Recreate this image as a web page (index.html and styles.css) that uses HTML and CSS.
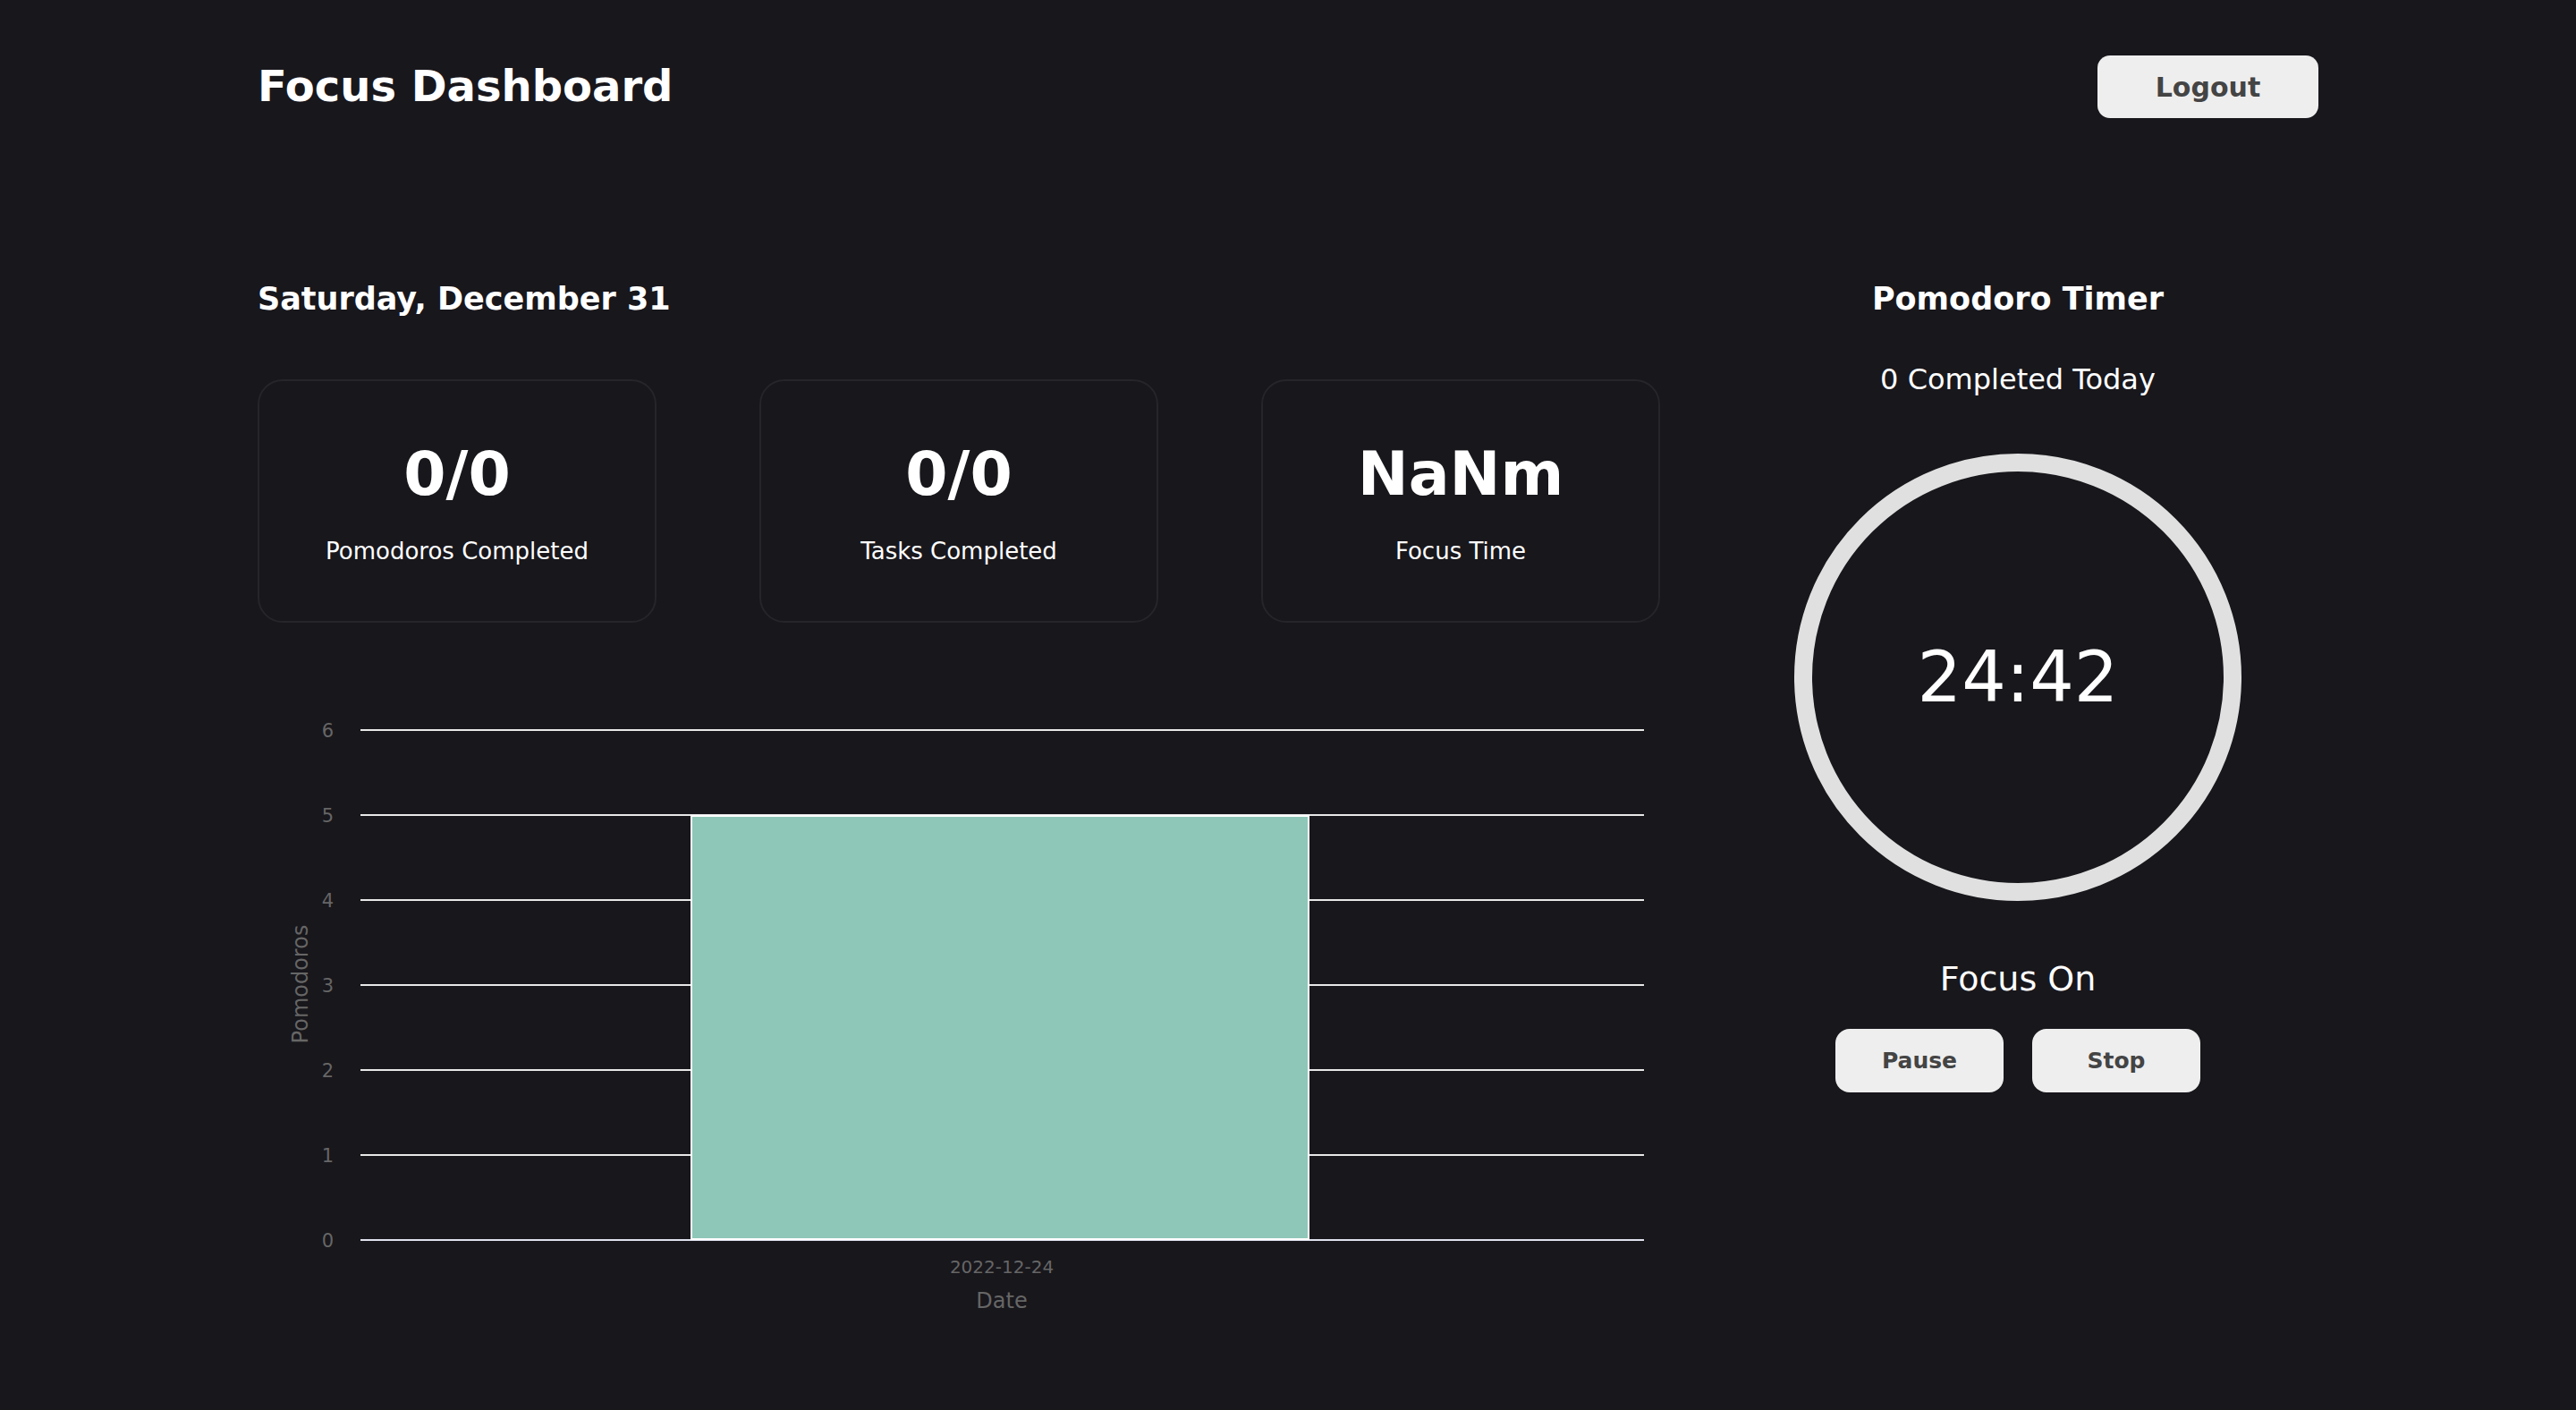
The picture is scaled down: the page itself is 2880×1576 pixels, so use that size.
FILE: index.html
```html
<!DOCTYPE html>
<html lang="en">
<head>
<meta charset="utf-8">
<title>Focus Dashboard</title>
<link rel="stylesheet" href="styles.css">
</head>
<body>
<div class="page">
  <header class="topbar">
    <h1 class="brand">Focus Dashboard</h1>
    <button class="btn btn-logout">Logout</button>
  </header>

  <main class="layout">
    <section class="overview">
      <h2 class="section-title">Saturday, December 31</h2>
      <div class="stats">
        <div class="stat-card">
          <div class="stat-value">0/0</div>
          <div class="stat-label">Pomodoros Completed</div>
        </div>
        <div class="stat-card">
          <div class="stat-value">0/0</div>
          <div class="stat-label">Tasks Completed</div>
        </div>
        <div class="stat-card">
          <div class="stat-value stat-value-spaced">NaNm</div>
          <div class="stat-label">Focus Time</div>
        </div>
      </div>

      <div class="chart">
        <svg class="chart-svg" width="1568" height="720" viewBox="0 0 1568 720">
          <g class="grid">
            <line x1="115" y1="56" x2="1550" y2="56"/>
            <line x1="115" y1="151" x2="1550" y2="151"/>
            <line x1="115" y1="246" x2="1550" y2="246"/>
            <line x1="115" y1="341" x2="1550" y2="341"/>
            <line x1="115" y1="436" x2="1550" y2="436"/>
            <line x1="115" y1="531" x2="1550" y2="531"/>
            <line class="zero" x1="115" y1="626" x2="1550" y2="626"/>
          </g>
          <rect class="bar" x="485" y="152" width="690" height="473"/>
          <g class="tick-y">
            <text x="85" y="64">6</text>
            <text x="85" y="159">5</text>
            <text x="85" y="254">4</text>
            <text x="85" y="349">3</text>
            <text x="85" y="444">2</text>
            <text x="85" y="539">1</text>
            <text x="85" y="634">0</text>
          </g>
          <text class="tick-x" x="832" y="663">2022-12-24</text>
          <text class="axis-title" x="832" y="702">Date</text>
          <text class="axis-title" transform="translate(56 340) rotate(-90)" x="0" y="0">Pomodoros</text>
        </svg>
      </div>
    </section>

    <aside class="timer">
      <h2 class="section-title">Pomodoro Timer</h2>
      <p class="timer-count">0 Completed Today</p>
      <div class="timer-ring">
        <span class="timer-time">24:42</span>
      </div>
      <p class="timer-mode">Focus On</p>
      <div class="timer-actions">
        <button class="btn btn-action">Pause</button>
        <button class="btn btn-action">Stop</button>
      </div>
    </aside>
  </main>
</div>
</body>
</html>
```

FILE: styles.css
```css
* {
  box-sizing: border-box;
}

html, body {
  margin: 0;
  padding: 0;
  background: #18171c;
}

body {
  font-family: "DejaVu Sans", "Open Sans", sans-serif;
  color: #ffffff;
  min-height: 1576px;
}

.page {
  width: 2304px;
  margin: 0 auto;
}

.topbar {
  display: flex;
  justify-content: space-between;
  align-items: center;
  padding-top: 62px;
}

.brand {
  margin: 0;
  font-size: 48px;
  font-weight: 700;
  line-height: 1.2;
}

.btn {
  font-family: "DejaVu Sans", "Open Sans", sans-serif;
  font-weight: 700;
  color: #444444;
  background: #eeeeee;
  border: none;
  display: flex;
  align-items: center;
  justify-content: center;
  padding: 0;
}

.btn-logout {
  width: 247px;
  height: 70px;
  border-radius: 14px;
  font-size: 30px;
}

.layout {
  display: grid;
  grid-template-columns: 1568px 1fr;
  column-gap: 64px;
  margin-top: 181px;
}

.section-title {
  margin: 0;
  font-size: 35px;
  font-weight: 700;
  line-height: 1.2;
}

.stats {
  display: flex;
  justify-content: space-between;
  margin-top: 69px;
}

.stat-card {
  width: 446px;
  height: 272px;
  border: 2px solid #262529;
  border-radius: 28px;
  padding: 70px 0 65px;
  display: flex;
  flex-direction: column;
  align-items: center;
}

.stat-value {
  font-size: 68px;
  font-weight: 700;
  line-height: 1;
  margin-bottom: 39px;
}

.stat-value-spaced {
  letter-spacing: 0;
}

.stat-label {
  font-size: 26px;
  line-height: 1;
}

.chart {
  margin-top: 64px;
}

.chart-svg {
  display: block;
}

.grid line {
  stroke: #e8e8e8;
  stroke-width: 2;
}

.grid line.zero {
  stroke: #dfe2ee;
}

.bar {
  fill: #8ec6b8;
  stroke: #ffffff;
  stroke-width: 2;
}

.tick-y text {
  font-family: "DejaVu Sans", sans-serif;
  font-size: 21px;
  fill: #666666;
  text-anchor: end;
}

.tick-x {
  font-family: "DejaVu Sans", sans-serif;
  font-size: 20px;
  fill: #666666;
  text-anchor: middle;
}

.axis-title {
  font-family: "DejaVu Sans", sans-serif;
  font-size: 24px;
  fill: #666666;
  text-anchor: middle;
}

.timer {
  display: flex;
  flex-direction: column;
  align-items: center;
}

.timer-count {
  margin: 50px 0 0;
  font-size: 32px;
  line-height: 1.2;
}

.timer-ring {
  margin-top: 64px;
  width: 500px;
  height: 500px;
  border: 20px solid #e0e0e0;
  border-radius: 50%;
  display: flex;
  align-items: center;
  justify-content: center;
}

.timer-time {
  font-size: 78px;
  font-weight: 400;
  line-height: 1;
}

.timer-mode {
  margin: 65px 0 0;
  font-size: 38px;
  line-height: 1.2;
}

.timer-actions {
  display: flex;
  gap: 32px;
  margin-top: 32px;
}

.btn-action {
  width: 188px;
  height: 71px;
  border-radius: 16px;
  font-size: 25px;
}
```
